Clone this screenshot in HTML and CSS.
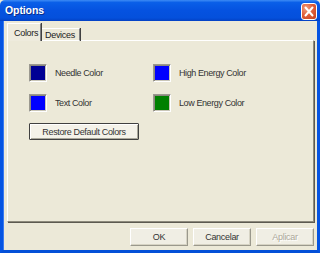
FILE: index.html
```html
<!DOCTYPE html>
<html>
<head>
<meta charset="utf-8">
<link rel="stylesheet" href="styles.css">
</head>
<body>
<div class="window">
  <div class="titlebar">
    <span class="title">Options</span>
    <span class="close">
      <svg width="16" height="17" viewBox="0 0 16 17"><path d="M4.5 4.5 L11.5 12.5 M11.5 4.5 L4.5 12.5" stroke="#fff" stroke-width="2" stroke-linecap="round"/></svg>
    </span>
  </div>
  <div class="frame">
    <div class="tabs">
      <div class="tab active">Colors</div>
      <div class="tab">Devices</div>
    </div>
    <div class="panel">
      <div class="grid">
        <div class="item"><span class="swatch needle"></span><span class="label">Needle Color</span></div>
        <div class="item"><span class="swatch blue"></span><span class="label">High Energy Color</span></div>
        <div class="item"><span class="swatch blue"></span><span class="label">Text Color</span></div>
        <div class="item"><span class="swatch green"></span><span class="label">Low Energy Color</span></div>
      </div>
      <button class="restore">Restore Default Colors</button>
    </div>
    <div class="buttons">
      <button class="btn">OK</button>
      <button class="btn">Cancelar</button>
      <button class="btn disabled">Aplicar</button>
    </div>
  </div>
</div>
</body>
</html>
```
FILE: styles.css
```css
html, body {
  margin: 0;
  padding: 0;
}
body {
  width: 320px;
  height: 253px;
  overflow: hidden;
  font-family: "Liberation Sans", Arial, sans-serif;
  background: #ece9d8;
}
.window {
  width: 320px;
  height: 253px;
  display: flex;
  flex-direction: column;
}
.titlebar {
  height: 21px;
  flex: none;
  display: flex;
  align-items: center;
  justify-content: space-between;
  padding: 0 3px 0 5px;
  background: linear-gradient(to bottom, #3d8bf5 0%, #0a5fe8 12%, #0552e0 50%, #0450dc 85%, #0341c4 100%);
  border-radius: 5px 5px 0 0;
}
.title {
  color: #fff;
  font-weight: bold;
  font-size: 10.5px;
  letter-spacing: -0.1px;
  text-shadow: 1px 1px 0 #0b2e8a;
  margin-top: -1px;
}
.close {
  width: 16px;
  height: 17px;
  box-sizing: border-box;
  border: 1px solid #fff;
  border-radius: 3px;
  background: radial-gradient(circle at 30% 30%, #f0a080 0%, #e0603c 45%, #c7401c 100%);
  display: flex;
  align-items: center;
  justify-content: center;
  margin-top: 1px;
}
.close svg {
  display: block;
  margin: -1px;
}
.frame {
  flex: 1;
  display: flex;
  flex-direction: column;
  border-left: 3px solid #0554e2;
  border-right: 3px solid #0554e2;
  border-bottom: 3px solid #0450d8;
  box-shadow: inset 1px 0 #3a7af0;
  padding: 3px 3px 3px 4px;
}
.tabs {
  height: 17px;
  display: flex;
  align-items: flex-end;
  position: relative;
  z-index: 1;
  margin-bottom: -1px;
}
.tab {
  box-sizing: border-box;
  height: 13px;
  padding: 0 4px;
  font-size: 9px;
  letter-spacing: -0.3px;
  color: #222;
  display: flex;
  align-items: center;
  background: #ece9d8;
  border-top: 1px solid #fff;
  border-right: 1px solid #808080;
  border-bottom: 1px solid #fff;
  box-shadow: 1px 0 #404040;
}
.tab.active {
  height: 18px;
  width: 34px;
  padding: 0 0 0 6px;
  border-left: 1px solid #fff;
  border-bottom: none;
  box-shadow: 1px 0 #404040;
  margin-right: 1px;
  background: #eeebdd;
}
.tab:not(.active) {
  width: 38px;
  padding-left: 3px;
}
.panel {
  height: 182px;
  box-sizing: border-box;
  border-top: 1px solid #fff;
  border-left: 1px solid #fff;
  border-right: 1px solid #8d8a7c;
  border-bottom: 1px solid #8d8a7c;
  box-shadow: 1px 1px 0 #5c5a50;
  padding: 23px 0 0 21px;
  background: #ece9d8;
}
.grid {
  display: grid;
  grid-template-columns: 124px auto;
  row-gap: 12px;
}
.item {
  display: flex;
  align-items: center;
  gap: 8px;
  height: 18px;
}
.swatch {
  width: 18px;
  height: 18px;
  box-sizing: border-box;
  border: 1px solid;
  border-color: #9b9990 #fff #fff #9b9990;
  box-shadow: inset 1px 1px #8a877c, inset -1px -1px #c9c6b8;
}
.needle { background-color: #000094; }
.blue { background-color: #0000ff; }
.green { background-color: #008000; }
.label {
  font-size: 9px;
  letter-spacing: -0.4px;
  color: #333;
}
.restore {
  margin-top: 11px;
  width: 110px;
  height: 17px;
  box-sizing: border-box;
  padding: 0;
  font-family: "Liberation Sans", Arial, sans-serif;
  font-size: 9px;
  letter-spacing: -0.35px;
  color: #333;
  background: #f4f2e9;
  border: 1px solid #404040;
  border-radius: 1px;
  box-shadow: inset 1px 1px #fff, inset -1px -1px #a9a79a;
  display: block;
}
.buttons {
  margin-top: 6px;
  display: flex;
  justify-content: flex-end;
  gap: 5px;
}
.btn {
  width: 58px;
  height: 18px;
  box-sizing: border-box;
  padding: 0;
  font-family: "Liberation Sans", Arial, sans-serif;
  font-size: 9px;
  letter-spacing: -0.3px;
  color: #333;
  background: #f0eee4;
  border: 1px solid;
  border-color: #fff #9a988c #9a988c #fff;
  box-shadow: inset -1px -1px #d6d3c4;
}
.btn.disabled {
  color: #aca899;
  text-shadow: 1px 1px #fff;
}
```
